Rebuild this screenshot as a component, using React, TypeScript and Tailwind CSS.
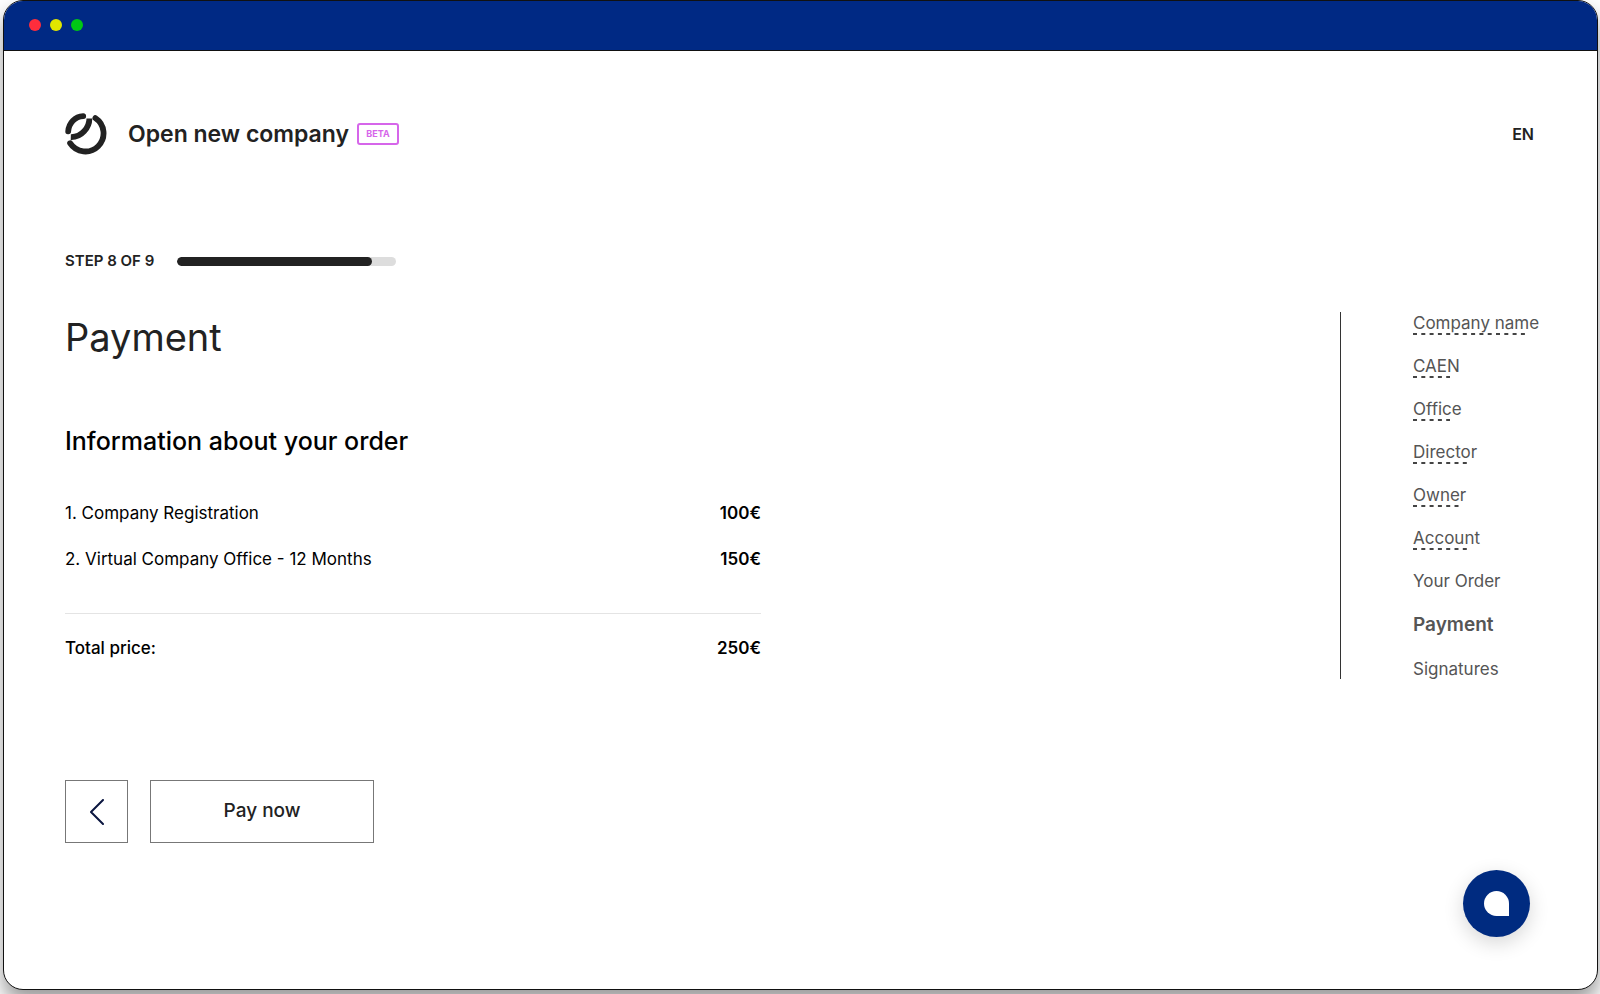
interface Step {
  label: string;
  dashes: number;
  current?: boolean;
}

const DASH = 4;
const DASH_PERIOD = 8.3;

const steps: Step[] = [
  { label: "Company name", dashes: 14 },
  { label: "CAEN", dashes: 5 },
  { label: "Office", dashes: 5 },
  { label: "Director", dashes: 7 },
  { label: "Owner", dashes: 6 },
  { label: "Account", dashes: 7 },
  { label: "Your Order", dashes: 0 },
  { label: "Payment", dashes: 0, current: true },
  { label: "Signatures", dashes: 0 },
];

const orderItems = [
  { name: "1. Company Registration", price: "100€" },
  { name: "2. Virtual Company Office - 12 Months", price: "150€" },
];

function Logo() {
  return (
    <svg viewBox="0 0 42 42" className="size-[42px]" fill="none" stroke="#222" strokeWidth="5.8" aria-hidden="true">
      <path d="M3.2 18.4C3.8 10 10 3.6 18.2 3.1" strokeLinecap="round" />
      <path d="M30.4 5.1A18.2 18.2 0 1 1 5.1 30.2" strokeLinecap="round" />
      <path d="M24.4 5.4C24.4 14.5 16.5 24.4 5.8 24.1" />
    </svg>
  );
}

function DashedLine({ count }: { count: number }) {
  const width = (count - 1) * DASH_PERIOD + DASH;
  return (
    <svg width={width} height="2" className="block" aria-hidden="true">
      <path d={`M0 1H${width}`} stroke="#444" strokeWidth="2" strokeDasharray={`${DASH} ${DASH_PERIOD - DASH}`} />
    </svg>
  );
}

export default function App() {
  return (
    <div className="flex min-h-screen flex-col overflow-hidden bg-white pr-0.5 pb-1 pl-[3px] font-['Inter',sans-serif] text-[#222]">
      <div className="relative flex flex-1 flex-col overflow-hidden rounded-[20px] border border-[#111] bg-white shadow-[0_12px_20px_rgba(0,0,0,0.4)]">
        {/* Window bar */}
        <div className="flex h-[50px] items-center gap-[9px] border-b border-[#111] bg-[#002984] px-[25px] pb-px">
          <span className="size-3 rounded-full bg-[#ff2d3c]" />
          <span className="size-3 rounded-full bg-[#e1e600]" />
          <span className="size-3 rounded-full bg-[#00c814]" />
        </div>

        <div className="pt-[62px] pr-[63px] pl-[61px]">
          <header className="flex items-center">
            <Logo />
            <span className="ml-[21px] text-[23px] leading-8 font-semibold">Open new company</span>
            <span className="ml-2 flex h-[22px] w-[42px] items-center justify-center rounded-[3px] border-2 border-[#d666ea] text-[9px] font-bold text-[#d666ea]">
              BETA
            </span>
            <button type="button" className="ml-auto text-base font-semibold">EN</button>
          </header>

          <div className="mt-24 flex items-center gap-[23px]">
            <span id="step-label" className="text-[15px] leading-5 font-semibold">STEP 8 OF 9</span>
            <div
              role="progressbar"
              aria-labelledby="step-label"
              aria-valuemin={0}
              aria-valuemax={9}
              aria-valuenow={8}
              className="h-[9px] w-[219px] overflow-hidden rounded-full bg-[#ddd]"
            >
              <div className="h-full rounded-full bg-[#222]" style={{ width: `${(8 / 9) * 100}%` }} />
            </div>
          </div>

          <div className="mt-[41px] flex items-start justify-between">
            <main className="w-[696px]">
              <h1 className="text-[38px] leading-[50px]">Payment</h1>
              <h2 className="mt-[63px] text-[25px] leading-8 font-medium text-black">Information about your order</h2>

              <ul className="mt-11 space-y-[22px] text-[17px] leading-6 text-black">
                {orderItems.map((item) => (
                  <li key={item.name} className="flex justify-between">
                    <span>{item.name}</span>
                    <span className="font-semibold">{item.price}</span>
                  </li>
                ))}
              </ul>
              <div className="mt-[42px] flex justify-between border-t border-[#e4e4e4] pt-[22px] text-[17px] leading-6 font-medium text-black">
                <span>Total price:</span>
                <span className="font-semibold">250€</span>
              </div>

              <div className="mt-[120px] flex gap-[22px]">
                <button type="button" aria-label="Back" className="flex size-[63px] items-center justify-center border border-[#777] text-[#0b1640]">
                  <svg viewBox="0 0 14 26" className="h-[26px] w-[14px]" fill="none" stroke="currentColor" strokeWidth="2" strokeLinecap="round" strokeLinejoin="round">
                    <path d="M13 1 1 13l12 12" />
                  </svg>
                </button>
                <button type="button" className="h-[63px] w-[224px] border border-[#777] text-[19px] font-medium">
                  Pay now
                </button>
              </div>
            </main>

            <nav className="border-l border-[#333] pt-px pl-[72px] text-[#555]">
              <ul className="flex w-[121px] flex-col gap-[21px] whitespace-nowrap">
                {steps.map((step) => (
                  <li key={step.label}>
                    <a
                      href="#"
                      aria-current={step.current ? "step" : undefined}
                      className={step.current ? "block text-[19px] leading-[26px] font-semibold" : "block text-[17px] leading-5"}
                    >
                      {step.label}
                      {step.dashes > 0 && <DashedLine count={step.dashes} />}
                    </a>
                  </li>
                ))}
              </ul>
            </nav>
          </div>
        </div>

        {/* Chat launcher */}
        <button
          type="button"
          aria-label="Open chat"
          className="absolute right-[67px] bottom-[52px] flex size-[67px] items-center justify-center rounded-full bg-[#002b80] shadow-[0_6px_20px_rgba(0,0,0,0.16)]"
        >
          <span className="size-[25px] rounded-full rounded-br-none bg-white" />
        </button>
      </div>
    </div>
  );
}
